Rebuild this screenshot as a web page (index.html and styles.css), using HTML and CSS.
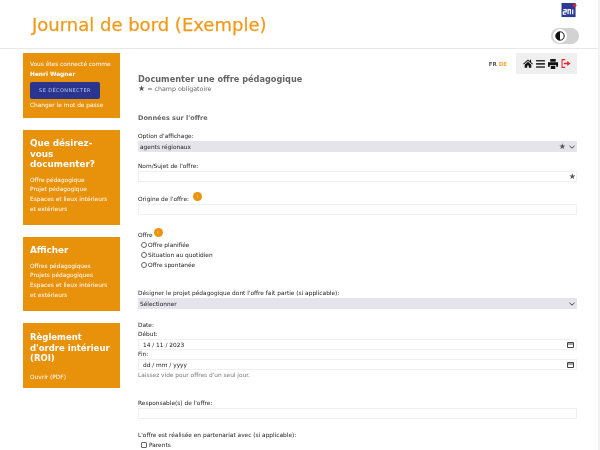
FILE: index.html
```html
<!DOCTYPE html>
<html lang="fr">
<head>
<meta charset="utf-8">
<title>Journal de bord (Exemple)</title>
<link rel="stylesheet" href="styles.css">
</head>
<body>
<div class="page">
  <header class="top">
    <h1 class="brand">Journal de bord (Exemple)</h1>
    <div class="top-right">
      <svg class="logo" viewBox="0 0 16 16" width="16" height="15"><rect width="15" height="15" fill="#2a3a94"/><path d="M2 7h3v2.500H2V12h3M7 12V7h2.500v5M12 7v5" stroke="#fff" stroke-width="1.300" fill="none"/><circle cx="14" cy="2.500" r="1.900" fill="#e0202c"/></svg>
      <div class="toggle"><span class="knob"><svg viewBox="0 0 10 10" width="10" height="10"><circle cx="5" cy="5" r="4.200" fill="#fff" stroke="#111" stroke-width="1"/><path d="M5 .8a4.200 4.200 0 0 0 0 8.400z" fill="#111"/></svg></span></div>
    </div>
  </header>
  <div class="body-grid">
    <aside class="side">
      <section class="card card-user">
        <p class="line">Vous êtes connecté comme</p>
        <p class="line strong">Henri Wagner</p>
        <a class="logout">SE DÉCONNECTER</a>
        <p class="line">Changer le mot de passe</p>
      </section>
      <section class="card card-doc">
        <h2>Que désirez-vous documenter?</h2>
        <ul><li>Offre pédagogique</li><li>Projet pédagogique</li><li>Espaces et lieux intérieurs et extérieurs</li></ul>
      </section>
      <section class="card card-show">
        <h2>Afficher</h2>
        <ul><li>Offres pédagogiques</li><li>Projets pédagogiques</li><li>Espaces et lieux intérieurs et extérieurs</li></ul>
      </section>
      <section class="card card-roi">
        <h2>Règlement<br>d'ordre intérieur<br>(ROI)</h2>
        <ul><li>Ouvrir (PDF)</li></ul>
      </section>
    </aside>
    <main class="main">
      <div class="tools">
        <span class="lang">FR <b>DE</b></span>
        <div class="toolbox">
          <svg viewBox="0 0 12 11" width="10" height="9"><path d="M6 .5 0 5.800l.7.8L6 2l5.300 4.600.7-.8L9.800 3.900V1H8.300v1.600zM2 7v3.800h3V8h2v2.800h3V7L6 3.500z" fill="#111"/></svg>
          <svg viewBox="0 0 10 9" width="9" height="8"><path d="M0 0h10v1.800H0zM0 3.500h10v1.800H0zM0 7h10v1.800H0z" fill="#333"/></svg>
          <svg viewBox="0 0 11 11" width="10" height="10"><path d="M2.500 0h6v3h-6zM0 3.500h11v5H9V6.500H2v2H0zM3 7.500h5V11H3z" fill="#111"/></svg>
          <svg viewBox="0 0 12 11" width="10" height="9"><path d="M5 .8H1.200v9.400H5" fill="none" stroke="#f0242c" stroke-width="1.300"/><path d="M3.500 4.500h4V2.500L11.500 5.500l-4 3v-2h-4z" fill="#f0242c"/></svg>
        </div>
      </div>
      <h2 class="title">Documenter une offre pédagogique</h2>
      <p class="req"><span class="star">★</span> = champ obligatoire</p>
      <h3 class="section">Données sur l'offre</h3>
      <form class="form">
        <div class="f-option">
          <label>Option d'affichage:</label>
          <div class="sel"><span>agents régionaux</span><span class="sel-end"><span class="star">★</span><svg class="chev" viewBox="0 0 6 4" width="6" height="4"><path d="M.5.8 3 3.200 5.500.8" fill="none" stroke="#444" stroke-width="1"/></svg></span></div>
        </div>
        <div class="f-name">
          <label>Nom/Sujet de l'offre:</label>
          <div class="inp"><span></span><span class="star">★</span></div>
        </div>
        <div class="f-origin">
          <label class="with-info">Origine de l'offre:<i class="info info-far">i</i></label>
          <div class="inp"></div>
        </div>
        <div class="f-offer">
          <label class="with-info">Offre<i class="info">i</i></label>
          <div class="opt"><span class="radio"></span>Offre planifiée</div>
          <div class="opt"><span class="radio"></span>Situation au quotidien</div>
          <div class="opt"><span class="radio"></span>Offre spontanée</div>
        </div>
        <div class="f-project">
          <label>Désigner le projet pédagogique dont l'offre fait partie (si applicable):</label>
          <div class="sel"><span>Sélectionner</span><span class="sel-end"><svg class="chev" viewBox="0 0 6 4" width="6" height="4"><path d="M.5.8 3 3.200 5.500.8" fill="none" stroke="#444" stroke-width="1"/></svg></span></div>
        </div>
        <div class="f-date">
          <label>Date:</label>
          <label>Début:</label>
          <div class="inp date"><span>14 / 11 / 2023</span><svg viewBox="0 0 7 7" width="7" height="7"><path d="M.5 1.500h6v5h-6zM.5 3h6" fill="none" stroke="#444" stroke-width="1"/></svg></div>
          <label>Fin:</label>
          <div class="inp date"><span>dd / mm / yyyy</span><svg viewBox="0 0 7 7" width="7" height="7"><path d="M.5 1.500h6v5h-6zM.5 3h6" fill="none" stroke="#444" stroke-width="1"/></svg></div>
          <p class="hint">Laissez vide pour offres d'un seul jour.</p>
        </div>
        <div class="f-resp">
          <label>Responsable(s) de l'offre:</label>
          <div class="inp"></div>
        </div>
        <div class="f-partner">
          <label>L'offre est réalisée en partenariat avec (si applicable):</label>
          <div class="opt"><span class="check"></span>Parents</div>
        </div>
      </form>
    </main>
  </div>
</div>
</body>
</html>
```
FILE: styles.css
```css
* { box-sizing: border-box; }
html, body { margin: 0; height: 100%; overflow: hidden; background: #fff; }
body { font-family: "DejaVu Sans", sans-serif; color: #1a1a1a; font-size: 5.850px; }
.page { height: 450px; border-right: 2px solid #f2f2f2; overflow: hidden; filter: blur(.3px); }
p, h1, h2, h3, ul { margin: 0; padding: 0; }
ul { list-style: none; }

.top { height: 49px; border-bottom: 1px solid #e8e8e8; display: flex; justify-content: space-between; padding: 0 19px 0 32px; }
.brand { font-size: 18px; line-height: 24px; font-weight: 400; color: #f09a1c; margin-top: 13px; -webkit-text-stroke: .25px #f09a1c; }
.top-right { display: flex; flex-direction: column; align-items: flex-end; padding-top: 3px; gap: 10px; }
.logo { margin-right: 2px; display: block; }
.toggle { width: 28px; height: 16px; border-radius: 8px; background: #d2d2d2; padding: 1px 2px; }
.knob { width: 14px; height: 14px; border-radius: 50%; background: #fff; display: flex; align-items: center; justify-content: center; }

.body-grid { display: flex; padding: 4px 0 0 23px; }
.side { width: 97px; flex: none; display: flex; flex-direction: column; gap: 12px; }
.card { background: #e8920c; color: #fff; padding: 7px 7px 0; }
.card-user { height: 65px; }
.card-doc { height: 95px; }
.card-show { height: 74px; }
.card-roi { height: 65px; }
.line { line-height: 9.700px; }
.strong { font-weight: 700; }
.logout { display: block; width: 70px; height: 17px; margin: 3px 0 2px; border-radius: 2px; background: #2a3590; color: #b9c3ee; font-size: 5px; letter-spacing: .4px; line-height: 17px; text-align: center; }
.card h2 { font-size: 8.800px; line-height: 10.500px; font-weight: 700; margin: 0 0 6px; padding-top: 1px; }
.card ul { padding-right: 3px; }
.card li { line-height: 9.700px; }
.card-roi h2 { margin-bottom: 9px; padding-top: 2px; white-space: nowrap; font-size: 8.500px; }

.main { width: 439px; margin-left: 18px; flex: none; }
.tools { display: flex; justify-content: flex-end; align-items: center; gap: 9px; height: 21px; }
.lang { font-size: 5.500px; font-weight: 700; color: #555; }
.lang b { color: #f3a53a; }
.toolbox { width: 61px; height: 21px; background: #efefef; display: flex; align-items: center; justify-content: center; gap: 3px; }
.title { font-size: 8.200px; font-weight: 700; color: #666; line-height: 12px; margin-top: -1px; }
.req { color: #666; line-height: 8px; font-size: 6.300px; }
.star { color: #555; font-size: 8px; line-height: 1; }
.section { font-size: 6.500px; font-weight: 700; color: #666; line-height: 10px; margin-top: 20px; }
.form { display: flex; flex-direction: column; }
label { display: block; height: 9px; line-height: 9px; }
.with-info { display: flex; align-items: flex-start; }
.sel, .inp { height: 11px; display: flex; justify-content: space-between; align-items: center; padding: 0 0 0 2px; line-height: 10px; }
.sel { background: #e4e4ea; }
.inp { background: #fff; border: 1px solid #f0f0f0; }
.sel-end { display: flex; align-items: center; gap: 3px; padding-right: 2px; }
.chev { display: block; }
.info { flex: none; width: 9px; height: 9px; margin: -3px 0 0 1px; border-radius: 50%; background: #ec940f; color: #ffd28a; font-size: 5px; font-style: normal; line-height: 9px; text-align: center; }
.info-far { margin-left: 4px; }
.opt { display: flex; align-items: center; gap: 1px; height: 10px; padding-left: 3px; }
.radio { width: 6px; height: 6px; border-radius: 50%; border: 1px solid #666; background: #fff; }
.check { width: 6px; height: 6px; border-radius: 1px; border: 1px solid #666; background: #fff; margin-right: 1px; }
.date { padding-left: 4px; padding-right: 2px; }
.hint { line-height: 10px; color: #777; }

.f-option { margin-top: 9px; }
.f-name { margin-top: 10px; }
.f-origin { margin-top: 13px; }
.f-offer { margin-top: 16px; }
.f-project { margin-top: 19px; }
.f-date { margin-top: 12px; }
.f-resp { margin-top: 19px; }
.f-partner { margin-top: 12px; }
```
